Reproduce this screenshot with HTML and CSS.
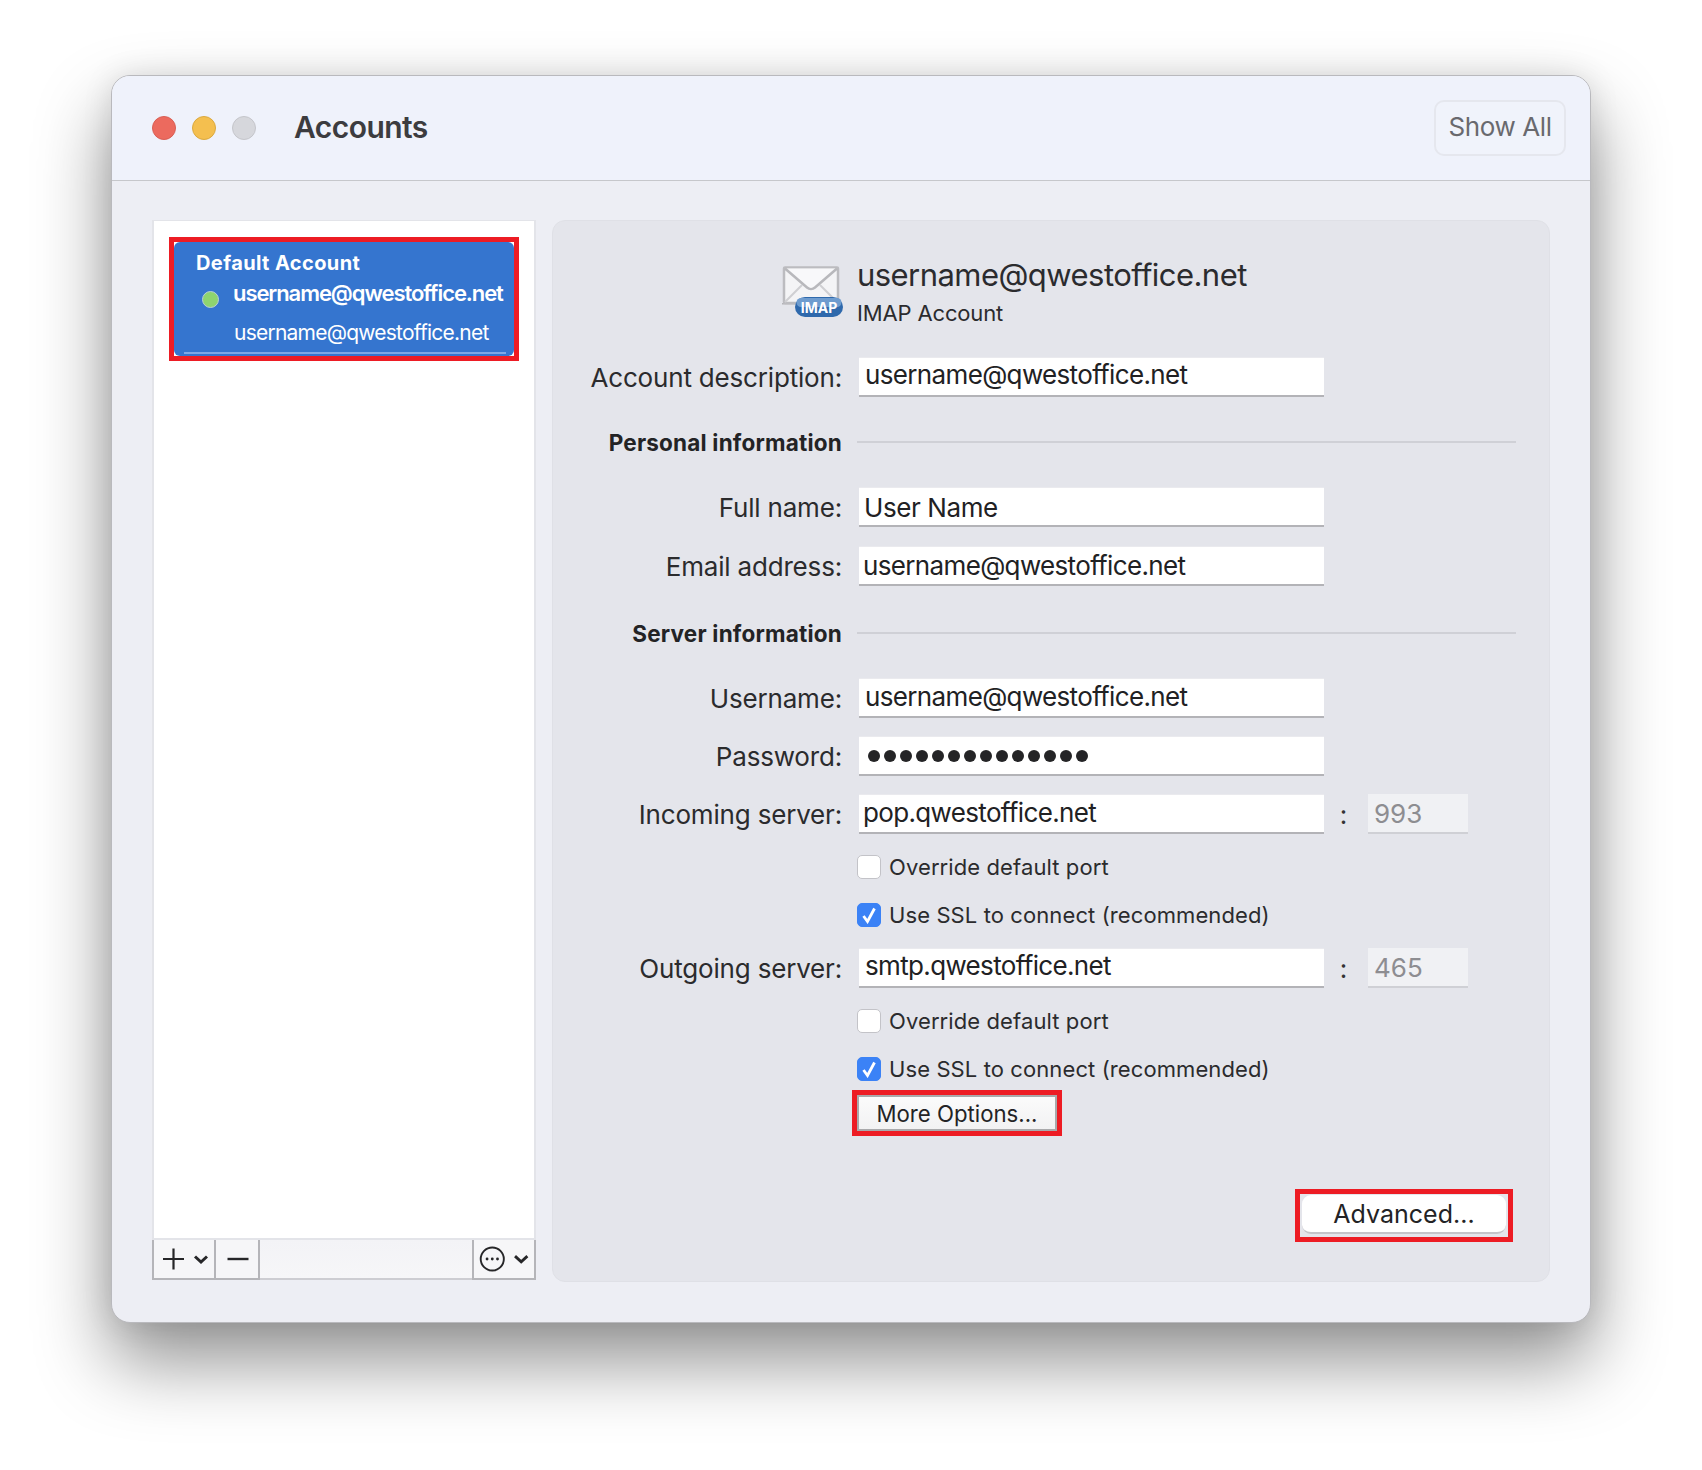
FILE: index.html
```html
<!DOCTYPE html>
<html lang="en">
<head>
<meta charset="utf-8">
<title>Accounts</title>
<link rel="stylesheet" href="styles.css">
</head>
<body>
<main class="window">
  <header class="titlebar">
    <div class="lights">
      <span class="light light-red"></span>
      <span class="light light-yellow"></span>
      <span class="light light-gray"></span>
    </div>
    <h1 class="title">Accounts</h1>
    <button class="show-all">Show All</button>
  </header>
  <div class="content">
    <aside class="list">
      <div class="list-body">
        <div class="mark mark-account">
          <div class="account">
            <div class="account-group">Default Account</div>
            <div class="account-name"><span class="dot"></span><span>username@qwestoffice.net</span></div>
            <div class="account-mail">username@qwestoffice.net</div>
          </div>
        </div>
      </div>
      <div class="toolbar">
        <div class="tool tool-add">
          <svg width="46" height="24" viewBox="0 0 46 24" fill="none" stroke="#262628">
            <path d="M1 12h21M11.500 1.500v21" stroke-width="2.200"/>
            <path d="M33 9.500l6 5.500 6-5.500" stroke-width="3"/>
          </svg>
        </div>
        <div class="tool tool-remove">
          <svg width="22" height="4" viewBox="0 0 22 4"><path d="M0.500 2h21" stroke="#262628" stroke-width="2.400"/></svg>
        </div>
        <div class="tool-space"></div>
        <div class="tool tool-more">
          <svg width="58" height="28" viewBox="0 0 58 28" fill="none" stroke="#262628">
            <circle cx="14" cy="14" r="12.200" stroke-width="2"/>
            <circle cx="8.500" cy="14" r="1.500" fill="#262628" stroke="none"/>
            <circle cx="14" cy="14" r="1.500" fill="#262628" stroke="none"/>
            <circle cx="19.500" cy="14" r="1.500" fill="#262628" stroke="none"/>
            <path d="M38 11l6.500 6 6.500-6" stroke-width="3"/>
          </svg>
        </div>
      </div>
    </aside>
    <section class="panel">
      <div class="panel-head">
        <svg class="mail-icon" width="64" height="54" viewBox="0 0 64 54">
          <rect x="1" y="38" width="55" height="1.500" fill="#b4b4b8"/>
          <rect x="3" y="2.500" width="54" height="35.500" rx="1" fill="#f4f4f6" stroke="#bcbcc0" stroke-width="2.500"/>
          <path d="M4 37l17-17M56 37L39 20" fill="none" stroke="#cfcfd3" stroke-width="2"/>
          <path d="M4 3.500l22 19c2.300 2 5.700 2 8 0l22-19" fill="#f8f8fa" stroke="#b8b8bc" stroke-width="2.500"/>
          <rect x="14" y="32" width="48" height="20" rx="10" fill="#2f69ac"/>
          <rect x="15.500" y="33" width="45" height="9" rx="4.500" fill="#6e9ccf"/>
          <text class="imap-badge" x="38" y="47.500" text-anchor="middle">IMAP</text>
        </svg>
        <div class="panel-head-text">
          <div class="account-title">username@qwestoffice.net</div>
          <div class="account-type">IMAP Account</div>
        </div>
      </div>

      <div class="row">
        <label class="label">Account description:</label>
        <div class="field text-a">username@qwestoffice.net</div>
      </div>

      <div class="row row-personal">
        <div class="label label-bold">Personal information</div>
        <div class="rule"></div>
      </div>

      <div class="row row-fullname">
        <label class="label">Full name:</label>
        <div class="field text-b">User Name</div>
      </div>
      <div class="row row-gap-19">
        <label class="label">Email address:</label>
        <div class="field text-c">username@qwestoffice.net</div>
      </div>

      <div class="row row-server">
        <div class="label label-bold">Server information</div>
        <div class="rule"></div>
      </div>

      <div class="row row-fullname">
        <label class="label">Username:</label>
        <div class="field text-d">username@qwestoffice.net</div>
      </div>
      <div class="row row-gap-18">
        <label class="label">Password:</label>
        <div class="field dots">
          <i></i><i></i><i></i><i></i><i></i><i></i><i></i><i></i><i></i><i></i><i></i><i></i><i></i><i></i>
        </div>
      </div>
      <div class="row row-gap-18">
        <label class="label">Incoming server:</label>
        <div class="field text-e">pop.qwestoffice.net</div>
        <span class="colon">:</span>
        <div class="port">993</div>
      </div>
      <div class="check-row check-first">
        <span class="box"></span><span class="check-text">Override default port</span>
      </div>
      <div class="check-row check-second">
        <span class="box box-on"><svg width="16" height="18" viewBox="0 0 16 18"><path d="M2.500 10l4 5.500 7-13" fill="none" stroke="#fff" stroke-width="2.800"/></svg></span><span class="check-text">Use SSL to connect (recommended)</span>
      </div>
      <div class="row row-outgoing">
        <label class="label">Outgoing server:</label>
        <div class="field text-a">smtp.qwestoffice.net</div>
        <span class="colon">:</span>
        <div class="port">465</div>
      </div>
      <div class="check-row check-first">
        <span class="box"></span><span class="check-text">Override default port</span>
      </div>
      <div class="check-row check-second">
        <span class="box box-on"><svg width="16" height="18" viewBox="0 0 16 18"><path d="M2.500 10l4 5.500 7-13" fill="none" stroke="#fff" stroke-width="2.800"/></svg></span><span class="check-text">Use SSL to connect (recommended)</span>
      </div>
      <div class="mark mark-more"><button class="btn-more">More Options...</button></div>
      <div class="mark mark-advanced"><button class="btn-advanced">Advanced...</button></div>
    </section>
  </div>
</main>
</body>
</html>
```
FILE: styles.css
```css
* { box-sizing: border-box; }
html, body { margin: 0; padding: 0; background: #fff; }
body {
  width: 1702px;
  height: 1470px;
  overflow: hidden;
  padding: 75px 111px 0;
  font-family: Inter, "Liberation Sans", sans-serif;
  color: #29292b;
}
.window {
  width: 1480px;
  height: 1248px;
  display: flex;
  flex-direction: column;
  background: #edeef4;
  border: 1px solid #b9b9bd;
  border-radius: 19px;
  box-shadow: 0 38px 72px 2px rgba(0, 0, 0, 0.42), 0 0 30px rgba(0, 0, 0, 0.10);
  overflow: hidden;
}
.titlebar {
  height: 105px;
  flex: none;
  display: flex;
  align-items: center;
  background: #eff2fb;
  border-bottom: 1.500px solid #c6c7cb;
  padding: 0 24px 0 40px;
}
.lights { display: flex; gap: 16px; }
.light { width: 24px; height: 24px; border-radius: 50%; border: 1px solid transparent; }
.light-red { background: #ec6a5e; border-color: #d95f54; }
.light-yellow { background: #f4bf4f; border-color: #dba93f; }
.light-gray { background: #d6d7dc; border-color: #c4c5ca; }
.title {
  margin: -2px 0 0 38px;
  font-size: 30px;
  font-weight: 600;
  color: #3c3c3f;
  letter-spacing: -0.55px;
}
.show-all {
  margin-left: auto;
  width: 132px;
  height: 56px;
  font: 400 26px Inter, "Liberation Sans", sans-serif;
  letter-spacing: -0.4px;
  color: #69696e;
  background: #f0f3fb;
  border: 2px solid #e5e7ee;
  border-radius: 10px;
  padding: 0 0 3px 0;
}
.content {
  flex: 1;
  display: flex;
  gap: 16px;
  padding: 39px 0 0 40px;
}
.list {
  width: 384px;
  height: 1060px;
  display: flex;
  flex-direction: column;
  flex: none;
}
.list-body {
  flex: 1;
  background: #fff;
  border: 2px solid #e3e4e9;
  border-top-width: 1px;
  border-bottom-width: 1px;
  padding: 16px 0 0 15px;
}
.mark { border: 5px solid #ed1c24; }
.mark-account { width: 350px; height: 124px; background: #fff; }
.account {
  height: 114px;
  background: #3575cf;
  border-radius: 6px;
  color: #fff;
  position: relative;
  padding: 9px 0 0 22px;
}
.account::after {
  content: "";
  position: absolute;
  left: 10px;
  right: 8px;
  bottom: 2px;
  height: 2px;
  background: #7ea8e6;
}
.account-group { font-size: 20px; font-weight: 700; line-height: 24px; letter-spacing: 0.4px; }
.account-name {
  display: flex;
  align-items: center;
  font-size: 22px;
  font-weight: 600;
  letter-spacing: -1.07px;
  line-height: 28px;
  margin-top: 4px;
}
.dot {
  width: 17px;
  height: 17px;
  margin: 9px 14px -3px 6px;
  flex: none;
  border-radius: 50%;
  background: #8ed46f;
  border: 1.500px solid #b9cfd8;
}
.account-mail {
  font-size: 21px;
  line-height: 28px;
  margin: 12px 0 0 38px;
  letter-spacing: -0.77px;
}
.toolbar {
  height: 41px;
  flex: none;
  display: flex;
  background: linear-gradient(#f3f3f6, #f6f6f8);
  border-bottom: 2px solid #cdcdd2;
  border-top: 1px solid #e3e4e9;
}
.tool {
  height: 40px;
  margin-bottom: -2px;
  display: flex;
  align-items: center;
  flex: none;
  border-left: 2px solid #b5b5b9;
  border-bottom: 2px solid #b5b5b9;
  background: #f6f6f8;
}
.tool-add { width: 62px; padding-left: 8px; }
.tool-remove { width: 46px; padding-left: 11px; border-right: 2px solid #b5b5b9; }
.tool-space { flex: 1; }
.tool-more { width: 64px; padding-left: 5px; border-right: 2px solid #b5b5b9; }
.panel {
  width: 998px;
  height: 1062px;
  flex: none;
  background: #e4e5eb;
  border: 1px solid #dfe0e6;
  border-radius: 13px;
  display: flex;
  flex-direction: column;
}
.panel-head {
  display: flex;
  align-items: flex-start;
  gap: 12px;
  padding: 44px 0 0 228px;
  height: 136px;
  flex: none;
}
.imap-badge { font: 700 14px Inter, "Liberation Sans", sans-serif; fill: #fff; }
.panel-head-text { margin-top: -10px; }
.account-title { font-size: 31px; line-height: 40px; color: #2b2b2e; letter-spacing: -0.55px; }
.account-type { font-size: 22px; line-height: 28px; margin-top: 4px; color: #2b2b2e; letter-spacing: -0.15px; }
.row { display: flex; align-items: center; flex: none; height: 40px; }
.label {
  width: 289px;
  margin-right: 17px;
  flex: none;
  text-align: right;
  font-size: 26px;
  letter-spacing: -0.18px;
  white-space: nowrap;
  color: #2b2b2d;
}
.label-bold { font-size: 22.500px; font-weight: 700; color: #232325; letter-spacing: 0.2px; }
.rule { width: 659px; height: 2px; margin-left: -2px; background: #cfd0d6; }
.field {
  width: 465px;
  height: 40px;
  flex: none;
  background: #fff;
  border-top: 1px solid #eaeaee;
  border-bottom: 2px solid #b3b3b7;
  font-size: 26px;
  line-height: 34px;
  color: #212123;
  letter-spacing: -0.65px;
}
.text-a { padding-left: 6px; }
.text-b { padding-left: 5px; letter-spacing: -0.4px; line-height: 40px; }
.text-c { padding-left: 4px; line-height: 38px; }
.text-d { padding-left: 6px; line-height: 36px; }
.text-e { padding-left: 4px; line-height: 36px; }
.row-personal { margin-top: 25px; }
.row-fullname { margin-top: 25px; }
.row-server { margin-top: 27px; }
.row-gap-19 { margin-top: 19px; }
.row-gap-18 { margin-top: 18px; }
.row-outgoing { margin-top: 21px; }
.dots { display: flex; align-items: center; gap: 4px; padding: 0 0 0 9px; }
.dots i { width: 12px; height: 12px; border-radius: 50%; background: #242426; }
.colon { width: 44px; flex: none; text-align: center; padding-right: 5px; font-size: 26px; color: #333; }
.port {
  width: 100px;
  height: 40px;
  flex: none;
  background: #f0f1f4;
  border-bottom: 2px solid #cfd0d5;
  padding-left: 6px;
  font-size: 26px;
  line-height: 40px;
  color: #8d8d91;
}
.check-row { display: flex; align-items: center; flex: none; height: 24px; margin-left: 304px; }
.check-first { margin-top: 21px; }
.check-second { margin-top: 24px; }
.box {
  width: 24px;
  height: 24px;
  flex: none;
  display: flex;
  align-items: center;
  justify-content: center;
  margin-right: 8px;
  background: #fff;
  border: 1px solid #c3c3c8;
  border-radius: 5px;
}
.box-on { background: #3b82f6; border-color: #3b82f6; }
.check-text { font-size: 22px; letter-spacing: 0.1px; color: #2b2b2d; white-space: nowrap; }
.mark-more { width: 210px; height: 46px; margin: 9px 0 0 299px; flex: none; }
.btn-more {
  width: 100%;
  height: 100%;
  font: 400 22.200px Inter, "Liberation Sans", sans-serif;
  color: #232325;
  background: linear-gradient(#fbfbfb, #f2f2f3);
  border: 2px solid #a9a9ab;
  padding: 0;
}
.mark-advanced { width: 218px; height: 53px; margin: 53px 0 0 742px; flex: none; }
.btn-advanced {
  display: block;
  width: 204px;
  height: 39px;
  margin: 1px 0 0 2px;
  font: 400 25px Inter, "Liberation Sans", sans-serif;
  letter-spacing: 0.05px;
  color: #232325;
  background: #fff;
  border: 0;
  border-bottom: 2px solid #c4c4c9;
  border-radius: 9px;
  padding: 0;
}
```
